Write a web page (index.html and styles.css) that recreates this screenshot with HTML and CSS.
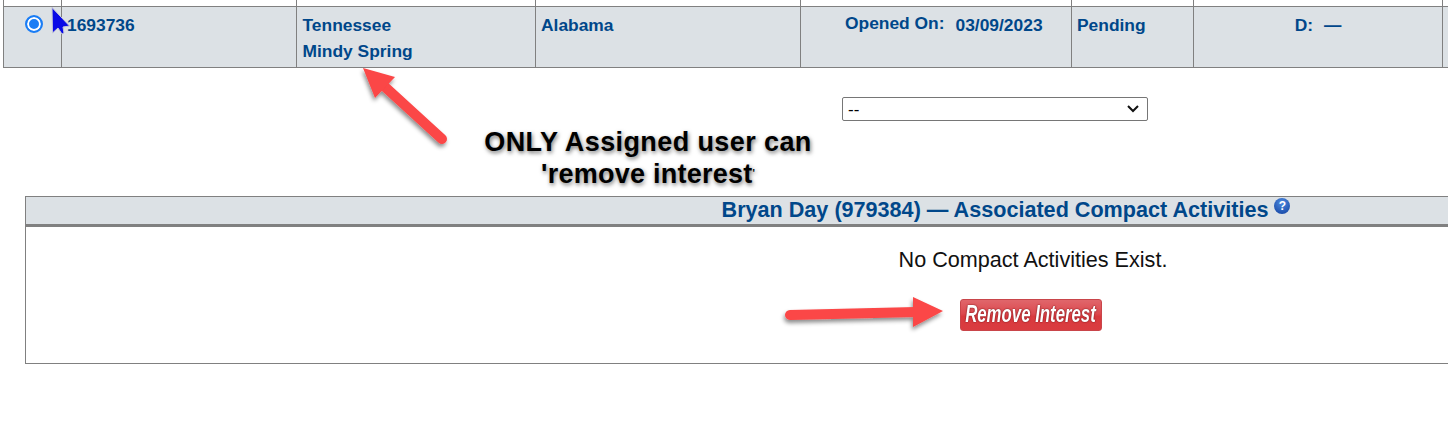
FILE: index.html
```html
<!DOCTYPE html>
<html lang="en">
<head>
<meta charset="utf-8">
<title>Associated Compact Activities</title>
<link rel="stylesheet" href="styles.css">
</head>
<body>
<div class="sheet">
  <div class="row stub">
    <div class="cell"></div><div class="cell"></div><div class="cell"></div><div class="cell"></div>
    <div class="cell"></div><div class="cell"></div><div class="cell"></div><div class="cell"></div>
  </div>
  <div class="row data">
    <div class="cell radio-cell"><input class="radio" type="radio" checked aria-label="Select"></div>
    <div class="cell">1693736</div>
    <div class="cell stack"><span>Tennessee</span><span>Mindy Spring</span></div>
    <div class="cell">Alabama</div>
    <div class="cell opened"><span>Opened On:</span><span class="date">03/09/2023</span></div>
    <div class="cell">Pending</div>
    <div class="cell centered"><span>D:</span><span>—</span></div>
    <div class="cell"></div>
  </div>

  <div class="select-row">
    <select class="picker"><option>--</option></select>
  </div>

  <section class="panel">
    <header class="panel-head">
      <h2 class="panel-title">Bryan Day (979384) — Associated Compact Activities</h2>
      <span class="help">?</span>
    </header>
    <div class="panel-body">
      <p class="empty">No Compact Activities Exist.</p>
      <button class="remove" type="button"><span class="remove-label">Remove Interest</span></button>
    </div>
  </section>
</div>

<div class="note">
  <div>ONLY Assigned user can</div>
  <div class="note-second">'remove interest<span class="note-tail">'</span></div>
</div>

<svg class="overlay" width="1448" height="424" viewBox="0 0 1448 424" aria-hidden="true">
  <defs>
    <filter id="soft" x="-20%" y="-20%" width="140%" height="150%">
      <feDropShadow dx="-1" dy="3" stdDeviation="2" flood-color="#000" flood-opacity=".45"/>
    </filter>
  </defs>
  <g filter="url(#soft)">
    <path d="M442 139 L384 86" stroke="#fb4646" stroke-width="10" stroke-linecap="round" fill="none"/>
    <path d="M363 68 L395 77 L375 98 Z" fill="#fb4646"/>
  </g>
  <g filter="url(#soft)">
    <path d="M790 315 L916 312" stroke="#fb4646" stroke-width="10" stroke-linecap="round" fill="none"/>
    <path d="M913 297 L943 311 L913 327 Z" fill="#fb4646"/>
  </g>
  <path d="M52 7.500 L52.500 33 L58 28 L62 34 L64 33 L63 27 L69.500 26 Z" fill="#0a0ae6" stroke="#c4c6d8" stroke-width="1"/>
</svg>
</body>
</html>
```
FILE: styles.css
```css
* { box-sizing: border-box; }
html, body { margin: 0; background: #fff; }
body {
  width: 1448px;
  height: 424px;
  overflow: hidden;
  position: relative;
  font-family: "Liberation Sans", Arial, sans-serif;
}
.sheet { padding-left: 3px; }

.row {
  display: grid;
  grid-template-columns: 58px 235px 239px 265px 271px 122px 249px 7px;
  width: 1446px;
}
.cell {
  border-left: 1px solid #808080;
  color: #00478a;
  font-size: 17.4px;
  font-weight: bold;
}
.stub { height: 6px; }
.data {
  height: 62px;
  background: #dce1e5;
  border-top: 1px solid #808080;
  border-bottom: 1px solid #808080;
}
.data .cell { padding: 8px 5px 0; line-height: 20px; }
.data .radio-cell { padding: 8px 0 0 21px; }
.radio {
  appearance: none;
  display: block;
  width: 18px;
  height: 18px;
  margin: 0;
  border: 2px solid #1a7df5;
  border-radius: 50%;
  background: #1a7df5;
  box-shadow: inset 0 0 0 2px #fff;
}
.data .stack { display: flex; flex-direction: column; gap: 6px; padding-left: 5.5px; }
.data .opened { display: flex; gap: 11px; padding-left: 44px; padding-top: 6px; }
.date { padding-top: 2px; }
.data .centered { display: flex; justify-content: center; gap: 11px; }

.select-row { padding: 29px 0 0 839px; }
.picker {
  display: block;
  appearance: none;
  width: 306px;
  height: 24px;
  padding: 0 0 0 5px;
  background: #fff url("data:image/svg+xml,%3Csvg xmlns='http://www.w3.org/2000/svg' width='14' height='10'%3E%3Cpath d='M2 2 L7 7 L12 2' fill='none' stroke='%23111' stroke-width='2'/%3E%3C/svg%3E") no-repeat right 7px center;
  border: 1px solid #767676;
  border-radius: 2px;
  font: 17px "Liberation Sans", Arial, sans-serif;
  color: #000;
}

.panel {
  width: 1440px;
  height: 168px;
  margin: 75px 0 0 22px;
  border: 1px solid #808080;
  border-right: 0;
}
.panel-head {
  height: 30px;
  background: #dce1e5;
  border-bottom: 3px solid #808080;
  display: flex;
  justify-content: center;
  align-items: flex-start;
  gap: 6px;
  padding-left: 521px;
}
.panel-title {
  margin: 0;
  padding-top: 1px;
  font-size: 21.600px;
  line-height: 24px;
  font-weight: bold;
  color: #00478a;
  white-space: nowrap;
}
.help {
  width: 16px;
  height: 16px;
  margin-top: 1px;
  border-radius: 50%;
  background: radial-gradient(circle at 50% 30%, #4f8be0, #0f3f9e);
  color: #fff;
  font-size: 12px;
  font-weight: bold;
  line-height: 16px;
  text-align: center;
}
.panel-body {
  display: flex;
  flex-direction: column;
  align-items: center;
  padding: 21px 0 0 575px;
}
.empty {
  margin: 0;
  font-size: 21.600px;
  line-height: 24px;
  color: #111;
}
.remove {
  display: flex;
  align-items: center;
  justify-content: center;
  width: 142px;
  height: 32px;
  margin: 27px 5px 0 0;
  padding: 0 0 2px;
  overflow: hidden;
  border: 1px solid #c9454a;
  border-radius: 3px;
  background: linear-gradient(#e0666b 0, #dc4a4f 45%, #d93a3e 55%, #da3c40 100%);
  color: #fff;
  font-family: "Liberation Sans", sans-serif;
  font-size: 23px;
  font-style: italic;
  font-weight: bold;
}
.remove-label {
  flex: none;
  transform: scaleX(.73);
  white-space: nowrap;
  text-shadow: 0 0 2px #7a1014, 0 0 1px #7a1014;
}

.note {
  position: absolute;
  left: 478px;
  top: 126px;
  width: 340px;
  text-align: center;
  color: #000;
  font-size: 27px;
  font-weight: bold;
  line-height: 32px;
  letter-spacing: 0.4px;
  text-shadow: 1px 2px 4px rgba(0,0,0,.55);
}
.note-second {
  margin-left: 63px;
  white-space: nowrap;
  text-align: left;
  letter-spacing: 0.25px;
}
.note-tail { font-size: 10px; vertical-align: 6px; }
.overlay { position: absolute; left: 0; top: 0; pointer-events: none; }
```
